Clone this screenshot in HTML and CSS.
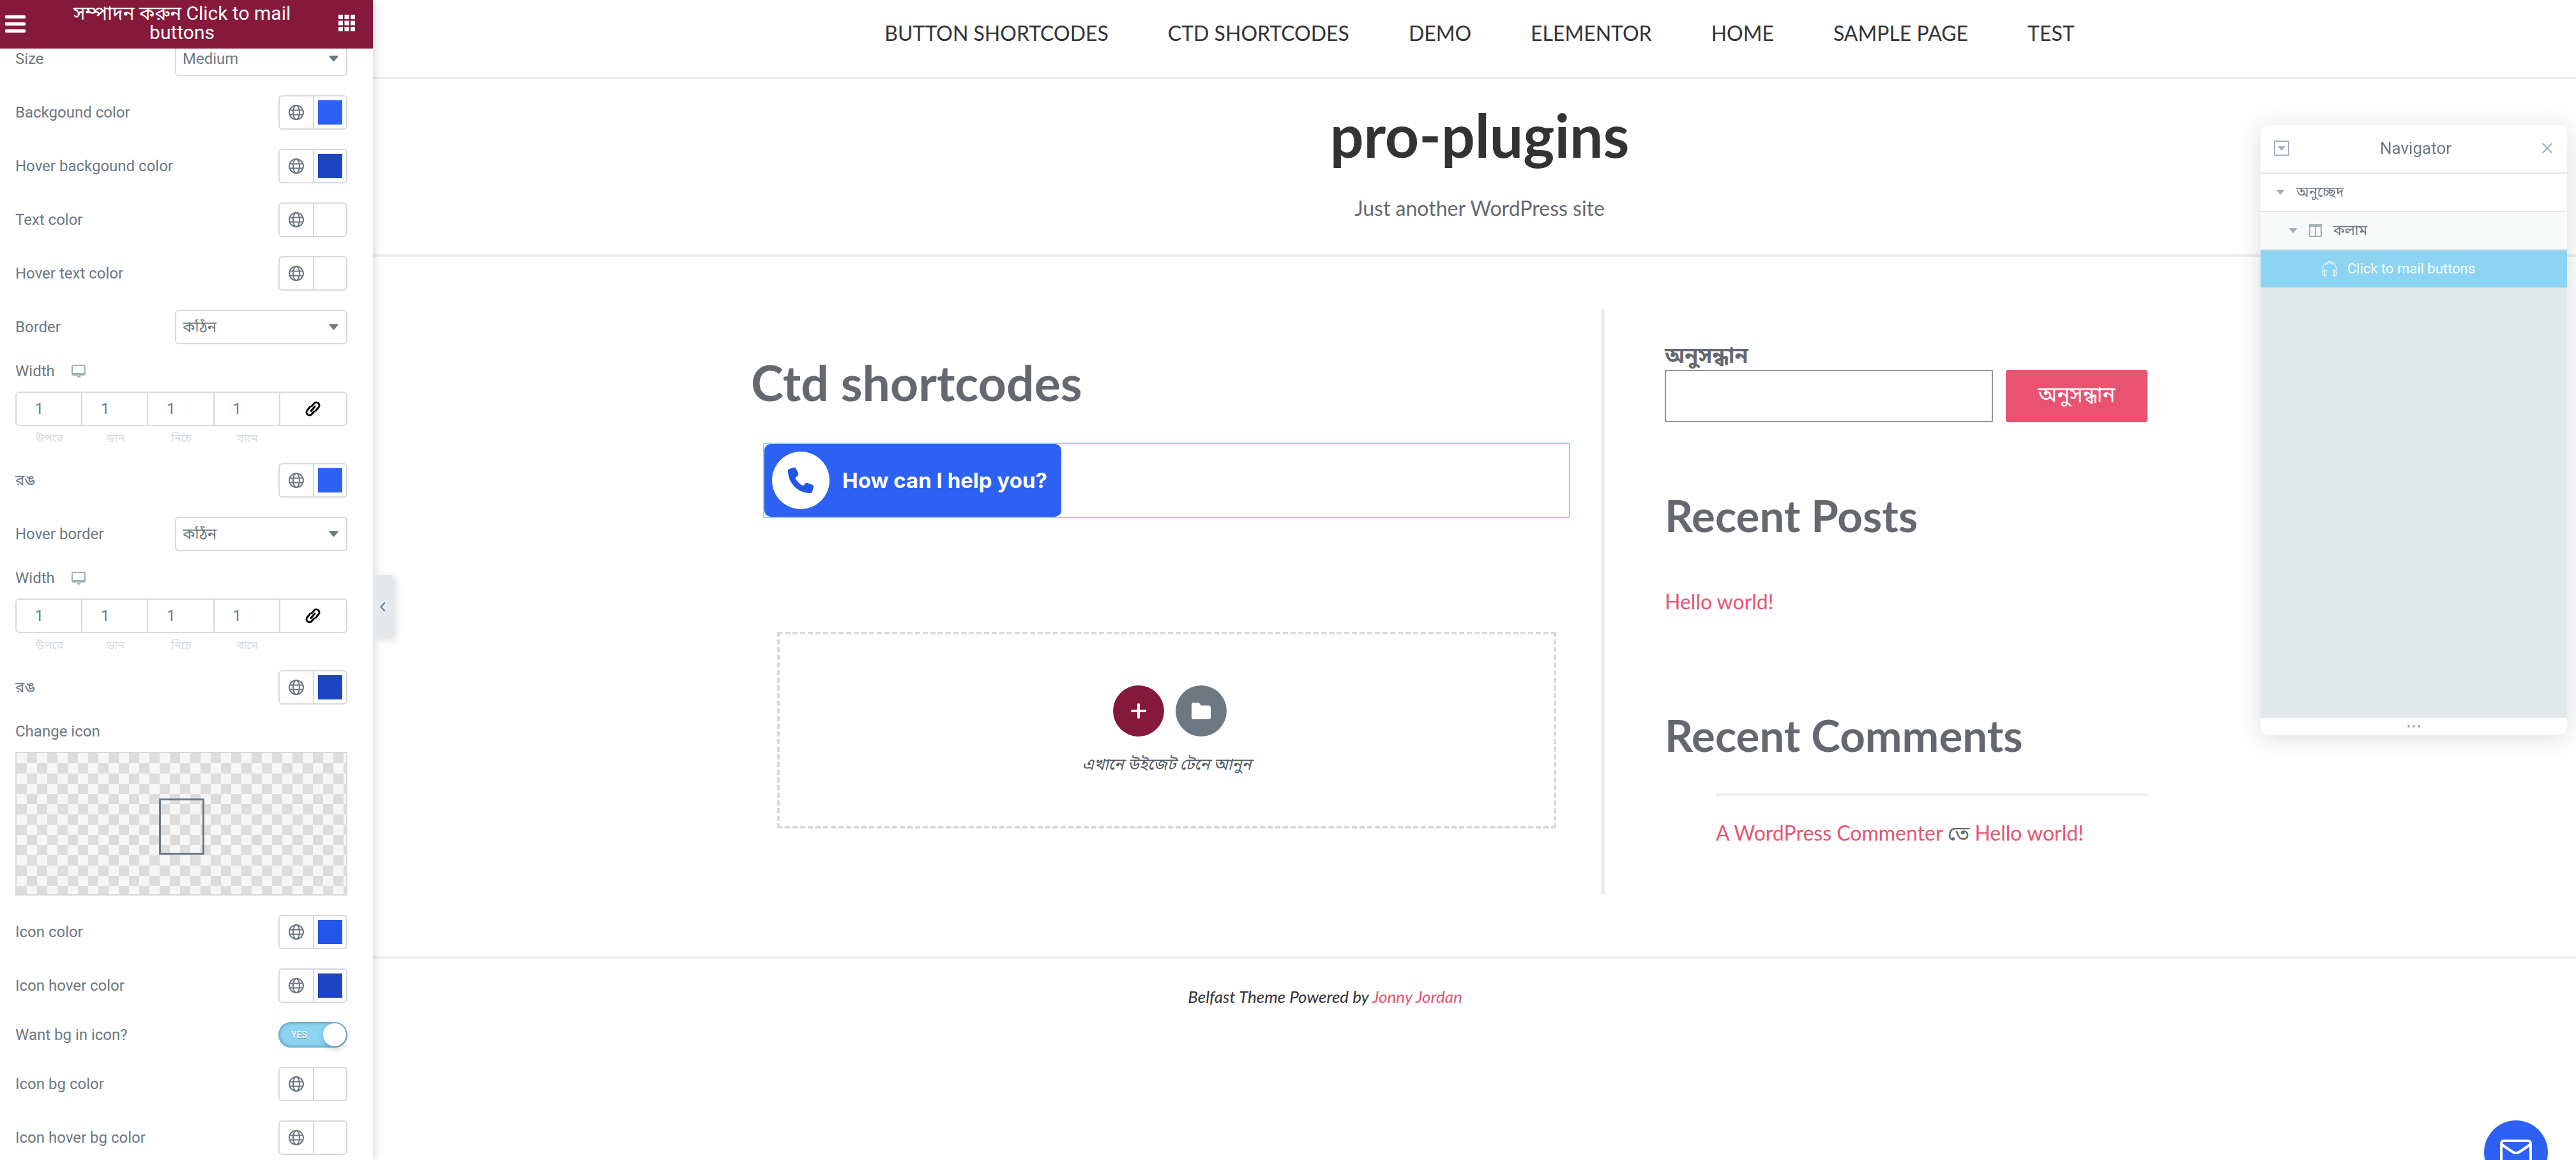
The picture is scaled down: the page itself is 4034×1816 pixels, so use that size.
FILE: index.html
```html
<!DOCTYPE html>
<html lang="bn">
<head>
<meta charset="utf-8">
<title>সম্পাদন করুন Click to mail buttons</title>
<link rel="stylesheet" href="styles.css">
</head>
<body>
<svg class="defs" aria-hidden="true">
  <symbol id="globe" viewBox="0 0 24 24">
    <g fill="none" stroke="currentColor" stroke-width="2">
      <circle cx="12" cy="12" r="11"/>
      <ellipse cx="12" cy="12" rx="5" ry="11"/>
      <path d="M2 8.500h20M2 15.500h20"/>
    </g>
  </symbol>
  <symbol id="caret" viewBox="0 0 16 10"><path d="M1 0h14q1 .6.4 1.4L9 9q-1 1-2 0L.6 1.400Q0 .6 1 0z" fill="currentColor"/></symbol>
  <symbol id="desktop" viewBox="0 0 22 20">
    <rect x="1" y="1" width="20" height="15" rx="2" fill="none" stroke="currentColor" stroke-width="2"/>
    <path d="M1 13h20v3H1zM9 18h5v2H9z" fill="currentColor"/>
  </symbol>
  <symbol id="link" viewBox="0 0 24 24">
    <g fill="none" stroke="currentColor" stroke-width="3" stroke-linecap="round">
      <path d="M10 8l4-4.500a4.600 4.600 0 0 1 6.800 6.300L16.500 15"/>
      <path d="M14 16l-4 4.500a4.600 4.600 0 0 1-6.800-6.300L7.500 9"/>
      <path d="M9 15.500l6-7"/>
    </g>
  </symbol>
</svg>
<div class="editor">
  <aside class="panel">
    <header class="panel-head">
      <button class="head-btn head-menu" aria-label="Menu">
        <svg width="32" height="28" viewBox="0 0 32 28"><path d="M2 2.500h28M2 13.500h28M2 24.500h28" stroke="#fff" stroke-width="5" stroke-linecap="round"/></svg>
      </button>
      <h2 class="panel-title">সম্পাদন করুন Click to mail buttons</h2>
      <button class="head-btn head-apps" aria-label="Widgets">
        <svg width="26" height="26" viewBox="0 0 26 26" fill="#fff"><path d="M0 0h7v7H0zM9.500 0h7v7h-7zM19 0h7v7h-7zM0 9.500h7v7H0zM9.500 9.500h7v7h-7zM19 9.500h7v7h-7zM0 19h7v7H0zM9.500 19h7v7h-7zM19 19h7v7h-7z"/></svg>
      </button>
    </header>
    <div class="panel-body">
      <form class="controls">
        <div class="row">
          <label for="size">Size</label>
          <div class="select"><select id="size"><option>Medium</option></select><svg><use href="#caret"/></svg></div>
        </div>
        <div class="row">
          <label for="bg">Backgound color</label>
          <div class="color"><button type="button" aria-label="Global"><svg><use href="#globe"/></svg></button><input type="color" id="bg" value="#2c61f3"></div>
        </div>
        <div class="row">
          <label for="hbg">Hover backgound color</label>
          <div class="color"><button type="button" aria-label="Global"><svg><use href="#globe"/></svg></button><input type="color" id="hbg" value="#1d45c1"></div>
        </div>
        <div class="row">
          <label for="tc">Text color</label>
          <div class="color"><button type="button" aria-label="Global"><svg><use href="#globe"/></svg></button><input type="color" id="tc" value="#ffffff"></div>
        </div>
        <div class="row">
          <label for="htc">Hover text color</label>
          <div class="color"><button type="button" aria-label="Global"><svg><use href="#globe"/></svg></button><input type="color" id="htc" value="#ffffff"></div>
        </div>
        <div class="row">
          <label for="border">Border</label>
          <div class="select"><select id="border"><option>কঠিন</option></select><svg><use href="#caret"/></svg></div>
        </div>
        <fieldset class="block dims-block">
          <legend class="block-label">Width <svg class="desktop"><use href="#desktop"/></svg></legend>
          <div class="dims">
            <div class="dim"><input id="w1" value="1"><label for="w1">উপরে</label></div>
            <div class="dim"><input id="w2" value="1"><label for="w2">ডান</label></div>
            <div class="dim"><input id="w3" value="1"><label for="w3">নিচে</label></div>
            <div class="dim"><input id="w4" value="1"><label for="w4">বামে</label></div>
            <button type="button" class="link" aria-label="Link values"><svg><use href="#link"/></svg></button>
          </div>
        </fieldset>
        <div class="row">
          <label for="bc">রঙ</label>
          <div class="color"><button type="button" aria-label="Global"><svg><use href="#globe"/></svg></button><input type="color" id="bc" value="#2c61f3"></div>
        </div>
        <div class="row">
          <label for="hborder">Hover border</label>
          <div class="select"><select id="hborder"><option>কঠিন</option></select><svg><use href="#caret"/></svg></div>
        </div>
        <fieldset class="block dims-block">
          <legend class="block-label">Width <svg class="desktop"><use href="#desktop"/></svg></legend>
          <div class="dims">
            <div class="dim"><input id="h1" value="1"><label for="h1">উপরে</label></div>
            <div class="dim"><input id="h2" value="1"><label for="h2">ডান</label></div>
            <div class="dim"><input id="h3" value="1"><label for="h3">নিচে</label></div>
            <div class="dim"><input id="h4" value="1"><label for="h4">বামে</label></div>
            <button type="button" class="link" aria-label="Link values"><svg><use href="#link"/></svg></button>
          </div>
        </fieldset>
        <div class="row">
          <label for="hbc">রঙ</label>
          <div class="color"><button type="button" aria-label="Global"><svg><use href="#globe"/></svg></button><input type="color" id="hbc" value="#1d45c1"></div>
        </div>
        <div class="block">
          <div class="block-label">Change icon</div>
          <button type="button" class="media" aria-label="Change icon"><span class="media-frame"></span></button>
        </div>
        <div class="row">
          <label for="ic">Icon color</label>
          <div class="color"><button type="button" aria-label="Global"><svg><use href="#globe"/></svg></button><input type="color" id="ic" value="#2156e7"></div>
        </div>
        <div class="row">
          <label for="ihc">Icon hover color</label>
          <div class="color"><button type="button" aria-label="Global"><svg><use href="#globe"/></svg></button><input type="color" id="ihc" value="#1d45c1"></div>
        </div>
        <div class="row">
          <label for="want">Want bg in icon?</label>
          <label class="switch"><input type="checkbox" id="want" checked><span>YES</span></label>
        </div>
        <div class="row">
          <label for="ibc">Icon bg color</label>
          <div class="color"><button type="button" aria-label="Global"><svg><use href="#globe"/></svg></button><input type="color" id="ibc" value="#ffffff"></div>
        </div>
        <div class="row">
          <label for="ihbc">Icon hover bg color</label>
          <div class="color"><button type="button" aria-label="Global"><svg><use href="#globe"/></svg></button><input type="color" id="ihbc" value="#ffffff"></div>
        </div>
      </form>
    </div>
    <button class="collapse" aria-label="Collapse panel">
      <svg width="8" height="14" viewBox="0 0 8 14"><path d="M7 1L1.500 7 7 13" fill="none" stroke="#6d7882" stroke-width="2" stroke-linecap="round"/></svg>
    </button>
  </aside>

  <div class="site">
    <nav class="site-nav">
      <a href="#">BUTTON SHORTCODES</a>
      <a href="#">CTD SHORTCODES</a>
      <a href="#">DEMO</a>
      <a href="#">ELEMENTOR</a>
      <a href="#">HOME</a>
      <a href="#">SAMPLE PAGE</a>
      <a href="#">TEST</a>
    </nav>
    <header class="branding">
      <a class="site-title" href="#">pro-plugins</a>
      <p class="tagline">Just another WordPress site</p>
    </header>
    <div class="content">
      <main class="main">
        <h1>Ctd shortcodes</h1>
        <div class="widget">
          <button class="help">
            <span class="help-icon"><svg width="40" height="40" viewBox="0 0 512 512" fill="#2156e7"><path d="M164.900 24.600c-7.700-18.600-28-28.500-47.400-23.200l-88 24C12.100 30.200 0 46 0 64c0 247.400 200.600 448 448 448 18 0 33.800-12.100 38.600-29.500l24-88c5.300-19.400-4.600-39.700-23.200-47.400l-96-40c-16.300-6.800-35.200-2.100-46.300 11.600L304.700 368C234.300 334.700 177.300 277.700 144 207.300L193.300 167c13.700-11.200 18.400-30 11.600-46.300l-40-96z"/></svg></span>
            How can I help you?
          </button>
        </div>
        <div class="drop">
          <div class="drop-btns">
            <button class="round add" aria-label="Add section"><svg width="24" height="24" viewBox="0 0 24 24"><path d="M12 2v20M2 12h20" stroke="#fff" stroke-width="4" stroke-linecap="round"/></svg></button>
            <button class="round folder" aria-label="Template library"><svg width="30" height="26" viewBox="0 0 30 26"><path d="M3 0h7.500q1 0 1.800 1L15 4.500h12q3 0 3 3V23q0 3-3 3H3q-3 0-3-3V3q0-3 3-3z" fill="#fff"/></svg></button>
          </div>
          <p>এখানে উইজেট টেনে আনুন</p>
        </div>
      </main>
      <aside class="sidebar">
        <form class="search">
          <label for="s">অনুসন্ধান</label>
          <div class="search-row"><input id="s" type="text"><button type="button">অনুসন্ধান</button></div>
        </form>
        <h2>Recent Posts</h2>
        <p class="post"><a href="#">Hello world!</a></p>
        <h2>Recent Comments</h2>
        <p class="comment"><a href="#">A WordPress Commenter</a> তে <a href="#">Hello world!</a></p>
      </aside>
    </div>
    <footer class="site-footer">Belfast Theme Powered by <a href="#">Jonny Jordan</a></footer>
  </div>
</div>

<section class="navigator">
  <header>
    <button aria-label="Expand all"><svg width="24" height="24" viewBox="0 0 24 24"><rect x="1" y="1" width="22" height="22" rx="1" fill="none" stroke="currentColor" stroke-width="2"/><path d="M6 9h12l-6 7z" fill="currentColor"/></svg></button>
    <h3>Navigator</h3>
    <button aria-label="Close"><svg width="16" height="16" viewBox="0 0 16 16"><path d="M1 1l14 14M15 1L1 15" stroke="currentColor" stroke-width="2" stroke-linecap="round"/></svg></button>
  </header>
  <ul>
    <li class="lvl1"><svg class="tri"><use href="#caret"/></svg>অনুচ্ছেদ</li>
    <li class="lvl2"><svg class="tri"><use href="#caret"/></svg><svg width="20" height="20" viewBox="0 0 20 20"><path d="M1 1h18v18H1zM10 3v16" fill="none" stroke="currentColor" stroke-width="2"/><path d="M1 1h18v3H1z" fill="currentColor"/></svg>কলাম</li>
    <li class="lvl3"><svg width="24" height="24" viewBox="0 0 24 24" fill="none" stroke="#fff"><path d="M1.500 14V11a10.500 10.500 0 0 1 21 0v3M5 5.500q7-6 14 0"/><path d="M6.500 14v9H4.500q-4-1-4-4.500t4-4.500zM17.500 14v9h2q4-1 4-4.500t-4-4.500zM4.500 14v9M19.500 14v9"/></svg>Click to mail buttons</li>
  </ul>
  <div class="navigator-foot"><svg width="20" height="4" viewBox="0 0 20 4" fill="currentColor"><circle cx="2" cy="2" r="2"/><circle cx="10" cy="2" r="2"/><circle cx="18" cy="2" r="2"/></svg></div>
</section>

<button class="mail" aria-label="Mail"><svg width="50" height="40" viewBox="0 0 50 40" fill="none" stroke="#fff" stroke-width="4"><rect x="2" y="2" width="46" height="36" rx="4"/><path d="M3 8l16 11q6 4 12 0L47 8"/></svg></button>
</body>
</html>
```
FILE: styles.css
```css
* { box-sizing: border-box; }
body { margin: 0; background: #fff; font-family: Lato, "Noto Sans Bengali", "Noto Sans", sans-serif; font-size: 32px; line-height: 40px; color: #65686f; overflow: hidden; }
button, input, select { font: inherit; color: inherit; margin: 0; padding: 0; border: 0; background: none; }
svg { display: block; flex: none; }
h1, h2, h3, p, ul { margin: 0; padding: 0; }
a { color: #e95371; text-decoration: none; }
.defs { position: absolute; width: 0; height: 0; }
.editor { display: flex; height: 100vh; }

/* editor panel */
.panel { position: relative; z-index: 2; flex: none; width: 584px; display: flex; flex-direction: column; background: #fff; box-shadow: 0 0 16px rgba(0, 0, 0, .2); font-family: Roboto, "Noto Sans Bengali", "Noto Sans", sans-serif; font-size: 24px; line-height: 24px; color: #6d7882; }
.panel-head { position: relative; z-index: 1; flex: none; height: 76px; display: flex; align-items: center; background: #85193b; }
.panel-title { flex: 1; padding: 0 12px 4px 16px; text-align: center; color: #fff; font-size: 30px; line-height: 30px; font-weight: 400; }
.head-btn { display: flex; align-items: center; height: 76px; }
.head-menu { width: 48px; padding-left: 8px; }
.head-apps { width: 66px; padding: 0 0 4px 12px; }
.panel-body { flex: 1; min-height: 0; overflow: hidden; }
.controls { margin-top: -11px; padding: 0 40px 0 24px; }
.row { display: flex; align-items: center; justify-content: space-between; margin-bottom: 30px; }
.select { position: relative; width: 270px; height: 54px; }
.select select { appearance: none; width: 100%; height: 100%; padding: 0 36px 0 10px; border: 2px solid #d5dadf; border-radius: 6px; }
.select svg { position: absolute; right: 14px; top: 22px; width: 15px; height: 10px; pointer-events: none; }
.color { display: flex; width: 108px; height: 54px; border: 2px solid #d5dadf; border-radius: 6px; }
.color button { display: flex; align-items: center; justify-content: center; width: 54px; border-right: 2px solid #d5dadf; }
.color button svg { width: 24px; height: 24px; }
.color input { flex: 1; appearance: none; min-width: 0; height: 50px; padding: 6px; }
.color input::-webkit-color-swatch-wrapper { padding: 0; }
.color input::-webkit-color-swatch { border: 0; border-radius: 0; }
.block { margin: 0 0 30px; padding: 0; border: 0; min-width: 0; }
.block-label { display: flex; align-items: center; gap: 26px; padding: 0; margin-bottom: 20px; height: 24px; }
.desktop { width: 22px; height: 20px; color: #a4afb7; }
.dims { display: flex; height: 54px; border: 2px solid #d5dadf; border-radius: 6px; }
.dim { flex: 1; min-width: 0; }
.dim input { display: block; width: 100%; height: 50px; padding-right: 30px; text-align: center; border-right: 2px solid #d5dadf; }
.dim label { display: block; padding-top: 9px; text-align: center; font-size: 18px; line-height: 24px; color: #d5dadf; }
.link { flex: 1; display: flex; align-items: center; justify-content: center; color: #000; }
.link svg { width: 24px; height: 24px; }
.dims-block { margin-bottom: 58px; }
.media { display: flex; align-items: center; justify-content: center; width: 100%; height: 225px; border: 2px solid #d5dadf; background: repeating-conic-gradient(#ddd 0 25%, #f6f6f6 0 50%) 0 0 / 32px 32px; }
.media-frame { width: 71px; height: 88px; margin-top: 8px; border: 3px solid #6d7882; }
.switch { position: relative; display: block; width: 108px; height: 40px; }
.switch input { appearance: none; display: block; width: 108px; height: 40px; border-radius: 20px; background: #8dd4f2; box-shadow: inset 0 0 6px #3b7f9c; }
.switch input::after { content: ""; position: absolute; right: 2px; top: 2px; width: 36px; height: 36px; border-radius: 50%; background: #fff; box-shadow: 0 4px 8px rgba(0, 0, 0, .2); }
.switch span { position: absolute; left: 20px; top: 8px; font-size: 14px; line-height: 24px; font-weight: 500; color: #fff; text-shadow: 0 1px 1px rgba(0, 0, 0, .3); }
.collapse { position: absolute; left: 584px; top: calc(50% - 8px); width: 30px; height: 100px; display: flex; align-items: center; justify-content: center; background: #e6e9ec; box-shadow: 6px 2px 12px rgba(0, 0, 0, .12); }

/* previewed site */
.site { flex: 1; min-width: 0; }
.site-nav { display: flex; justify-content: center; gap: 93px; padding: 32px 0 48px 16px; border-bottom: 4px solid #eee; }
.site-nav a { color: #333; }
.branding { padding: 29px 0 52px 16px; text-align: center; border-bottom: 4px solid #eee; }
.site-title { display: block; font-size: 93px; line-height: 116px; font-weight: 700; color: #333; }
.tagline { margin-top: 37px; }
.content { display: flex; padding: 82px 671px 97px 592px; }
.main { flex: 1; min-width: 0; padding: 68px 48px 103px 0; border-right: 6px solid #eee; }
h1 { font-size: 77px; line-height: 92px; }
.widget { margin: 49px 0 178px 19px; border: 2px solid #8dd4f2; display: flex; }
.help { display: flex; align-items: center; gap: 20px; height: 114px; padding: 0 22px 0 12px; border-radius: 10px; background: #2c61f3; color: #fff; font-family: Inter, sans-serif; font-size: 33px; font-weight: 700; }
.help-icon { display: flex; align-items: center; justify-content: center; width: 90px; height: 90px; border-radius: 50%; background: #fff; }
.drop { margin: 0 22px 0 41px; height: 308px; padding-top: 80px; border: 4px dashed #d5dadf; text-align: center; }
.drop-btns { display: flex; justify-content: center; gap: 18px; padding-left: 10px; }
.round { display: flex; align-items: center; justify-content: center; width: 80px; height: 80px; border-radius: 50%; }
.add { background: #85193b; }
.folder { background: #6d7882; }
.drop p { margin-top: 24px; font-family: Roboto, "Noto Sans Bengali", sans-serif; font-style: italic; font-size: 25px; color: #555d66; }
.sidebar { flex: none; width: 850px; padding: 51px 0 0 94px; }
.search label { display: block; margin-bottom: 4px; font-size: 34px; font-weight: 700; }
.search-row { display: flex; gap: 20px; }
.search-row input { flex: 1; min-width: 0; height: 82px; padding: 0 16px; border: 2px solid #949494; }
.search-row button { width: 222px; height: 82px; padding-bottom: 8px; border-radius: 4px; background: #e95371; color: #fff; font-size: 33px; }
.sidebar h2 { font-size: 69px; line-height: 82px; }
.search + h2 { margin-top: 105px; }
.post { margin: 74px 0 148px; }
.comment { margin: 50px 0 0 80px; padding-top: 38px; border-top: 4px solid #eee; }
.site-footer { padding: 43px 468px 0 0; text-align: center; border-top: 4px solid #eee; font-size: 26px; line-height: 32px; font-style: italic; color: #333; }

/* floating navigator */
.navigator { position: fixed; z-index: 3; right: 14px; top: 196px; width: 480px; height: 954px; display: flex; flex-direction: column; border-radius: 10px; overflow: hidden; background: #e3e8eb; box-shadow: 0 4px 40px rgba(0, 0, 0, .14); font-family: Roboto, "Noto Sans Bengali", sans-serif; font-size: 22px; color: #6d7882; }
.navigator header { display: flex; align-items: center; justify-content: space-between; height: 76px; padding: 0 23px 2px 21px; background: #fff; border-bottom: 2px solid #e3e7ea; }
.navigator h3 { font-size: 26px; font-weight: 400; }
.navigator svg { color: #a4afb7; }
.navigator ul { flex: 1; list-style: none; }
.navigator li { display: flex; align-items: center; gap: 18px; height: 60px; border-bottom: 2px solid #e3e7ea; background: #fff; }
.tri { width: 14px; height: 8px; }
.navigator .lvl1 { padding-left: 24px; }
.navigator .lvl2 { padding-left: 44px; background: #f9fafa; }
.navigator .lvl3 { gap: 16px; height: 58px; border: 0; padding-left: 96px; background: #8dd4f2; color: #fff; }
.navigator-foot { display: flex; align-items: center; justify-content: center; height: 26px; background: #fff; }
.mail { position: fixed; z-index: 3; right: 44px; bottom: -38px; width: 100px; height: 100px; display: flex; align-items: center; justify-content: center; border-radius: 50%; background: #2c61f3; }
```
